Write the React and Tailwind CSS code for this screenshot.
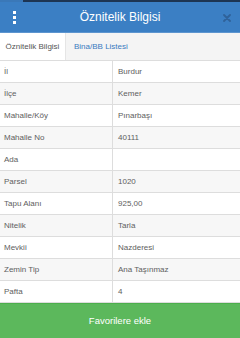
import React from 'react';

const rows = [
  ['İl', 'Burdur'],
  ['İlçe', 'Kemer'],
  ['Mahalle/Köy', 'Pınarbaşı'],
  ['Mahalle No', '40111'],
  ['Ada', ''],
  ['Parsel', '1020'],
  ['Tapu Alanı', '925,00'],
  ['Nitelik', 'Tarla'],
  ['Mevkii', 'Nazderesi'],
  ['Zemin Tip', 'Ana Taşınmaz'],
  ['Pafta', '4'],
];

const App = () => {
  return (
    <div className="w-[240px] h-[338px] flex flex-col bg-white overflow-hidden font-['Liberation_Sans',Arial,sans-serif]">
      <div className="h-[2px] flex">
        <div className="w-[23px] bg-[#3a78b8]" />
        <div className="flex-1 bg-[#1d3553]" />
      </div>
      <div className="h-[31px] bg-[#3b7fc4] flex items-center justify-between pl-[13px] pr-[9px] border-b border-[#5d95cf]">
        <div className="flex flex-col gap-[2px] w-[4px]">
          <span className="block w-[3px] h-[3px] bg-white" />
          <span className="block w-[3px] h-[3px] bg-white" />
          <span className="block w-[3px] h-[3px] bg-white" />
        </div>
        <div className="text-white text-[12px]">Öznitelik Bilgisi</div>
        <svg width="8" height="8" viewBox="0 0 8 8" className="mt-[1px]">
          <path d="M1 1L7 7M7 1L1 7" stroke="#2f629a" strokeWidth="1.8" strokeLinecap="round" />
        </svg>
      </div>
      <div className="h-[28px] bg-[#f4f4f4] flex items-end border-b border-[#dddddd]">
        <div className="h-[27px] w-[66px] bg-white flex items-center justify-center text-[8px] text-[#555555] border-r border-[#e5e5e5]">
          Öznitelik Bilgisi
        </div>
        <div className="h-[27px] flex items-center pl-[8px] text-[8px] text-[#3a7bbf]">
          Bina/BB Listesi
        </div>
      </div>
      <div className="flex flex-col">
        {rows.map(([label, value], i) => (
          <div
            key={label}
            className={`h-[22px] flex border-b border-[#dddddd] text-[8px] text-[#606060] ${i % 2 === 1 ? 'bg-[#f7f7f7]' : 'bg-white'}`}
          >
            <div className="w-[113px] flex items-center pl-[4px] border-r border-[#dddddd]">{label}</div>
            <div className="flex-1 flex items-center pl-[5px]">{value}</div>
          </div>
        ))}
      </div>
      <div className="flex-1 bg-[#5cb85c] border-t border-[#4cae4c] flex items-center justify-center text-white text-[9.5px]">
        Favorilere ekle
      </div>
    </div>
  );
};

export default App;
